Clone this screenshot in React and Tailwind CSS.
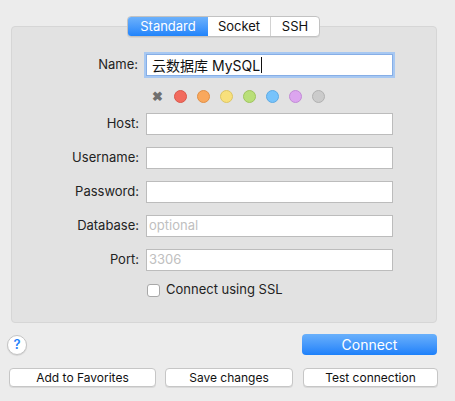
import React from 'react'

const font = "font-['Inter','Noto_Sans_CJK_SC',sans-serif]"

const swatches = [
  { bg: 'bg-[#f26b5e]', border: 'border-[#d9574b]' },
  { bg: 'bg-[#f9a85d]', border: 'border-[#e08f45]' },
  { bg: 'bg-[#f8e07c]', border: 'border-[#dcc564]' },
  { bg: 'bg-[#b9df78]', border: 'border-[#9fc55f]' },
  { bg: 'bg-[#77c3fb]', border: 'border-[#5eaae3]' },
  { bg: 'bg-[#dca5ef]', border: 'border-[#c28bd6]' },
  { bg: 'bg-[#cbcbcb]', border: 'border-[#b1b1b1]' },
]

function Field({ label, placeholder }) {
  return (
    <div className="flex items-center h-[22px]">
      <div className="w-[127px] text-right text-[13px] text-[#222]">{label}</div>
      <div className="ml-[7px] w-[247px] h-[22px] bg-white border border-[#bcbcbc] flex items-center px-[2px] text-[13px] text-[#c0c0c0]">
        {placeholder}
      </div>
    </div>
  )
}

export default function App() {
  return (
    <div className={`w-[455px] h-[401px] bg-[#ececec] ${font} overflow-hidden`}>
      <div className="pt-[16px] flex flex-col">
        {/* segmented control */}
        <div className="relative z-10 self-start ml-[127px] flex h-[21px] rounded-[4px] border border-[#c2c2c2] bg-white shadow-[0_1px_0_rgba(0,0,0,0.06)] overflow-hidden text-[13px]">
          <div className="w-[80px] flex items-center justify-center text-white bg-gradient-to-b from-[#6cb1fb] to-[#1f84fb]">Standard</div>
          <div className="w-[63px] flex items-center justify-center text-[#111] border-r border-[#d2d2d2]">Socket</div>
          <div className="w-[48px] flex items-center justify-center text-[#111]">SSH</div>
        </div>

        {/* panel */}
        <div className="-mt-[11px] ml-[11px] w-[426px] h-[297px] rounded-[4px] bg-[#e2e2e2] border border-[#d6d6d6] pt-[27px]">
          <div className="flex items-center h-[22px]">
            <div className="w-[126px] text-right text-[13px] text-[#222]">Name:</div>
            <div className="ml-[8px] w-[247px] h-[22px] bg-white border border-[#86aee6] shadow-[0_0_0_2px_#a7c8f2] flex items-center px-[5px] text-[14px] text-[#111]">
              云数据库 MySQL
              <span className="ml-px w-px h-[16px] bg-[#111]" />
            </div>
          </div>

          <div className="flex items-center h-[13px] mt-[14px] ml-[139px] gap-[10px]">
            <span className="w-[13px] text-center text-[13px] font-bold text-[#6f6f6f] leading-none">✖</span>
            {swatches.map((s, i) => (
              <span key={i} className={`w-[13px] h-[13px] rounded-full border ${s.bg} ${s.border}`} />
            ))}
          </div>

          <div className="mt-[10px] flex flex-col gap-[12px]">
            <Field label="Host:" />
            <Field label="Username:" />
            <Field label="Password:" />
            <Field label="Database:" placeholder="optional" />
            <Field label="Port:" placeholder="3306" />
          </div>

          <div className="mt-[12px] ml-[135px] flex items-center h-[14px]">
            <span className="w-[13px] h-[13px] rounded-[3px] bg-white border border-[#a8a8a8]" />
            <span className="ml-[6px] text-[13px] text-[#222]">Connect using SSL</span>
          </div>
        </div>

        {/* action row */}
        <div className="mt-[11px] flex items-center justify-between pl-[7px] pr-[18px] h-[21px]">
          <div className="w-[20px] h-[20px] rounded-full bg-white border border-[#c4c4c4] shadow-[0_1px_1px_rgba(0,0,0,0.1)] flex items-center justify-center text-[13px] font-semibold text-[#1e82fa]">
            ?
          </div>
          <div className="w-[135px] h-[21px] rounded-[4px] bg-gradient-to-b from-[#69b0fb] to-[#1b80fa] flex items-center justify-center text-[14px] text-white">
            Connect
          </div>
        </div>

        <div className="mt-[13px] ml-[9px] flex gap-[9px] h-[19px] text-[12px] text-[#111]">
          <div className="w-[147px] rounded-[4px] bg-white border border-[#c6c6c6] shadow-[0_1px_0_rgba(0,0,0,0.08)] flex items-center justify-center">Add to Favorites</div>
          <div className="w-[128px] rounded-[4px] bg-white border border-[#c6c6c6] shadow-[0_1px_0_rgba(0,0,0,0.08)] flex items-center justify-center">Save changes</div>
          <div className="ml-px w-[135px] rounded-[4px] bg-white border border-[#c6c6c6] shadow-[0_1px_0_rgba(0,0,0,0.08)] flex items-center justify-center">Test connection</div>
        </div>
      </div>
    </div>
  )
}
